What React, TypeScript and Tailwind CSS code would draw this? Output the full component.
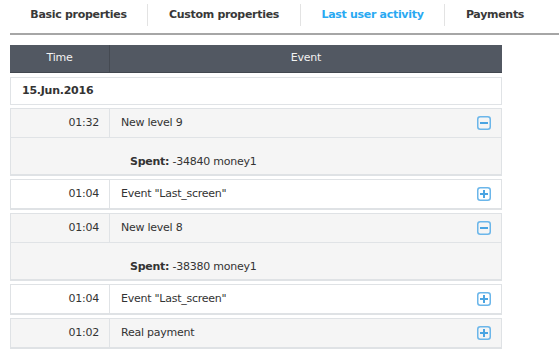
import React from 'react';

type Activity = {
    time: string;
    event: string;
    spent?: string;
    gray?: boolean;
};

const TABS = [
    { label: 'Basic properties', width: 'w-[137px]', active: false },
    { label: 'Custom properties', width: 'w-[153px]', active: false },
    { label: 'Last user activity', width: 'w-[144px]', active: true },
    { label: 'Payments', width: 'w-[101px]', active: false },
];

const ROWS: Activity[] = [
    { time: '01:32', event: 'New level 9', spent: '-34840 money1', gray: true },
    { time: '01:04', event: 'Event "Last_screen"' },
    { time: '01:04', event: 'New level 8', spent: '-38380 money1', gray: true },
    { time: '01:04', event: 'Event "Last_screen"' },
    { time: '01:02', event: 'Real payment', gray: true },
];

function ToggleIcon({ open }: { open: boolean }) {
    return (
        <svg width="14" height="14" viewBox="0 0 14 14" className="shrink-0">
            <rect x="0.75" y="0.75" width="12.5" height="12.5" rx="2.5" fill="none" stroke="#6bb6ea" strokeWidth="1.5" />
            <rect x="3" y="6" width="8" height="2" fill="#4aa4e2" />
            {!open && <rect x="6" y="3" width="2" height="8" fill="#4aa4e2" />}
        </svg>
    );
}

export default function App() {
    return (
        <div
            className="w-[559px] h-[353px] bg-white pl-[10px] overflow-hidden text-[11px] text-[#333] tracking-[-0.25px]"
            style={{ fontFamily: '"DejaVu Sans", Verdana, sans-serif' }}
        >
            {/* tabs */}
            <div className="flex pt-[4px] mb-[7px]">
                {TABS.map((tab, i) => (
                    <div
                        key={tab.label}
                        className={`${tab.width} h-[22px] flex items-center justify-center font-bold tracking-[-0.3px] ${i > 0 ? 'border-l border-[#e3e3e3]' : ''} ${tab.active ? 'text-[#2aa9f2]' : 'text-[#383838]'}`}
                    >
                        {tab.label}
                    </div>
                ))}
            </div>
            <div className="border-t-2 border-[#a6a6a6] mb-[10px]" />

            <div className="w-[492px]">
                {/* header */}
                <div className="flex h-[28px] bg-[#525862] border-b border-[#42474f] text-[#f2f2f2] mb-[4px]">
                    <div className="w-[100px] flex items-center justify-center border-r border-[#454a52]">Time</div>
                    <div className="flex-1 flex items-center justify-center">Event</div>
                </div>

                {/* date */}
                <div className="h-[28px] border border-[#e0e3e6] flex items-center pl-[11px] font-bold mb-[3px]">
                    15.Jun.2016
                </div>

                {ROWS.map((row, i) => (
                    <div
                        key={i}
                        className={`border border-b-2 border-[#dfe2e5] mb-[3px] ${row.gray ? 'bg-[#f5f5f5]' : 'bg-white'}`}
                    >
                        <div className="flex h-[28px]">
                            <div className="w-[99px] flex items-center justify-end pr-[10px] border-r border-[#e0e3e6]">
                                {row.time}
                            </div>
                            <div className="flex-1 flex items-center justify-between pl-[11px] pr-[10px]">
                                <span>{row.event}</span>
                                <ToggleIcon open={!!row.spent} />
                            </div>
                        </div>
                        {row.spent && (
                            <div className="h-[37px] border-t border-[#e0e3e6] pl-[119px] pt-[18px] leading-none">
                                <span className="font-bold">Spent:</span> {row.spent}
                            </div>
                        )}
                    </div>
                ))}
            </div>
        </div>
    );
}
